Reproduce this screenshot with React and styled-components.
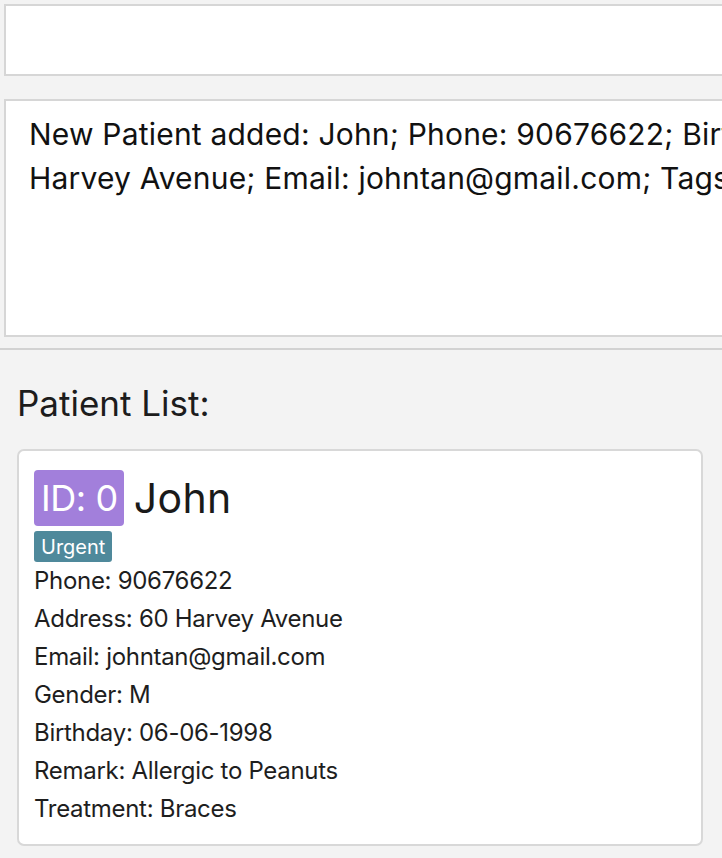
import React from 'react'
import styled, { createGlobalStyle } from 'styled-components'

const GlobalStyle = createGlobalStyle`
  html, body {
    margin: 0;
    padding: 0;
    background: #f3f3f3;
    overflow: hidden;
  }
  body {
    font-family: Inter, "Noto Sans", "Liberation Sans", sans-serif;
    color: #1c1c1c;
  }
  * { box-sizing: border-box; }
`

const Page = styled.div`
  display: flex;
  flex-direction: column;
  width: 722px;
  height: 858px;
  overflow: hidden;
`

const TopArea = styled.div`
  display: flex;
  flex-direction: column;
  gap: 23px;
  padding: 4px 0 0 4px;
`

const CommandBox = styled.div`
  width: 1000px;
  height: 72px;
  background: #fff;
  border: 2px solid #d6d6d6;
`

const ResultBox = styled.div`
  width: 1000px;
  height: 238px;
  background: #fff;
  border: 2px solid #d6d6d6;
  padding: 11px 0 0 23px;
  font-size: 30px;
  line-height: 44px;
  color: #111;
  white-space: pre;
  letter-spacing: 0.2px;
`

const Separator = styled.div`
  height: 2px;
  margin-top: 11px;
  background: #d2d2d2;
`

const ListPanel = styled.div`
  display: flex;
  flex-direction: column;
  padding: 32px 19px 0 17px;
`

const ListTitle = styled.div`
  font-size: 35px;
  line-height: 42px;
  color: #1c1c1c;
  margin-bottom: 25px;
  letter-spacing: 0;
`

const Card = styled.div`
  display: flex;
  flex-direction: column;
  align-items: flex-start;
  background: #fff;
  border: 2px solid #d8d8d8;
  border-radius: 7px;
  padding: 19px 15px 16px 15px;
`

const Header = styled.div`
  display: flex;
  align-items: center;
  gap: 10px;
`

const IdBadge = styled.span`
  background: #a27fdb;
  color: #fff;
  border-radius: 4px;
  font-size: 36px;
  line-height: 44px;
  padding: 6px 6px 6px 7px;
  letter-spacing: -0.4px;
`

const Name = styled.span`
  font-size: 41px;
  line-height: 44px;
  color: #1a1a1a;
  letter-spacing: 0.3px;
`

const Tag = styled.span`
  margin-top: 5px;
  background: ${props => props.color};
  color: #fff;
  border-radius: 3px;
  font-size: 20px;
  line-height: 24px;
  padding: 4px 7px 3px;
`

const Field = styled.div`
  font-size: 24px;
  line-height: 38px;
  color: #1e1e1e;
  letter-spacing: -0.3px;
`

const resultText =
  'New Patient added: John; Phone: 90676622; Birthday: 06-06-1998; Gender: M; Address: 60\n' +
  'Harvey Avenue; Email: johntan@gmail.com; Tags: [Urgent]; Remark: Allergic to Peanuts'

const patient = {
  id: 0,
  name: 'John',
  tags: [{ name: 'Urgent', color: '#4f899b' }],
  fields: [
    ['Phone', '90676622'],
    ['Address', '60 Harvey Avenue'],
    ['Email', 'johntan@gmail.com'],
    ['Gender', 'M'],
    ['Birthday', '06-06-1998'],
    ['Remark', 'Allergic to Peanuts'],
    ['Treatment', 'Braces'],
  ],
}

const PatientCard = ({ patient }) => (
  <Card>
    <Header>
      <IdBadge>ID: {patient.id}</IdBadge>
      <Name>{patient.name}</Name>
    </Header>
    {patient.tags.map(tag => (
      <Tag key={tag.name} color={tag.color}>{tag.name}</Tag>
    ))}
    {patient.fields.map(([label, value]) => (
      <Field key={label}>{label}: {value}</Field>
    ))}
  </Card>
)

const App = () => (
  <Page>
    <GlobalStyle />
    <TopArea>
      <CommandBox />
      <ResultBox>{resultText}</ResultBox>
    </TopArea>
    <Separator />
    <ListPanel>
      <ListTitle>Patient List:</ListTitle>
      <PatientCard patient={patient} />
    </ListPanel>
  </Page>
)

export default App
